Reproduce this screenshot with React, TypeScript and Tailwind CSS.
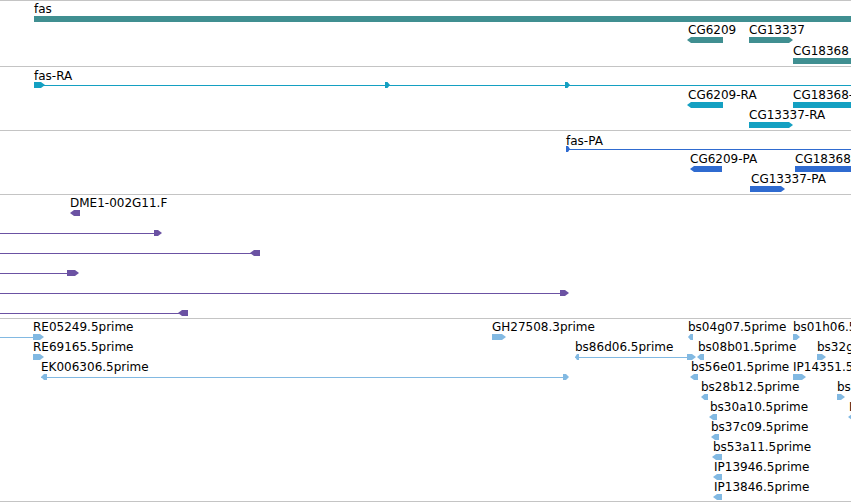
type Dir = 'l' | 'r' | 'n';
type Glyph = { x1: number; x2: number; y: number; h?: number; dir: Dir };
type Line = { x1: number; x2: number; y: number };
type Label = { text: string; x: number; y: number };

interface TrackData {
  top: number;
  height: number;
  color: string;
  lines: Line[];
  glyphs: Glyph[];
  labels: Label[];
  last?: boolean;
}

// polygon for a feature box, pointed at one end to show the strand
function points(g: Glyph) {
  const h = g.h ?? 6;
  const y1 = g.y;
  const y2 = g.y + h;
  const ym = g.y + h / 2;
  const t = Math.min(4, (g.x2 - g.x1) / 2);
  if (g.dir === 'r') return `${g.x1},${y1} ${g.x2 - t},${y1} ${g.x2},${ym} ${g.x2 - t},${y2} ${g.x1},${y2}`;
  if (g.dir === 'l') return `${g.x1},${ym} ${g.x1 + t},${y1} ${g.x2},${y1} ${g.x2},${y2} ${g.x1 + t},${y2}`;
  return `${g.x1},${y1} ${g.x2},${y1} ${g.x2},${y2} ${g.x1},${y2}`;
}

const tracks: TrackData[] = [
  {
    top: 0,
    height: 66,
    color: '#408f91',
    lines: [],
    glyphs: [
      { x1: 34, x2: 852, y: 16, dir: 'n' },
      { x1: 687, x2: 723, y: 37, dir: 'l' },
      { x1: 749, x2: 793, y: 37, dir: 'r' },
      { x1: 793, x2: 852, y: 58, dir: 'n' },
    ],
    labels: [
      { text: 'fas', x: 34, y: 4 },
      { text: 'CG6209', x: 688, y: 25 },
      { text: 'CG13337', x: 749, y: 25 },
      { text: 'CG18368', x: 793, y: 46 },
    ],
  },
  {
    top: 66,
    height: 64,
    color: '#14a0c2',
    lines: [{ x1: 34, x2: 852, y: 85 }],
    glyphs: [
      { x1: 34, x2: 45, y: 82, dir: 'r' },
      { x1: 385, x2: 390, y: 82, dir: 'r' },
      { x1: 565, x2: 570, y: 82, dir: 'r' },
      { x1: 687, x2: 723, y: 102, dir: 'l' },
      { x1: 793, x2: 852, y: 102, dir: 'n' },
      { x1: 749, x2: 793, y: 122, dir: 'r' },
    ],
    labels: [
      { text: 'fas-RA', x: 34, y: 71 },
      { text: 'CG6209-RA', x: 688, y: 90 },
      { text: 'CG18368-RA', x: 793, y: 90 },
      { text: 'CG13337-RA', x: 749, y: 110 },
    ],
  },
  {
    top: 130,
    height: 64,
    color: '#2f6bd0',
    lines: [{ x1: 566, x2: 852, y: 149 }],
    glyphs: [
      { x1: 566, x2: 570, y: 146, dir: 'r' },
      { x1: 690, x2: 722, y: 166, dir: 'l' },
      { x1: 795, x2: 852, y: 166, dir: 'n' },
      { x1: 750, x2: 785, y: 186, dir: 'r' },
    ],
    labels: [
      { text: 'fas-PA', x: 566, y: 136 },
      { text: 'CG6209-PA', x: 690, y: 154 },
      { text: 'CG18368-PA', x: 795, y: 154 },
      { text: 'CG13337-PA', x: 751, y: 174 },
    ],
  },
  {
    top: 194,
    height: 124,
    color: '#6b52a3',
    lines: [
      { x1: 0, x2: 156, y: 233 },
      { x1: 0, x2: 252, y: 253 },
      { x1: 0, x2: 69, y: 273 },
      { x1: 0, x2: 562, y: 293 },
      { x1: 0, x2: 180, y: 313 },
    ],
    glyphs: [
      { x1: 70, x2: 80, y: 210, dir: 'l' },
      { x1: 154, x2: 162, y: 230, dir: 'r' },
      { x1: 250, x2: 260, y: 250, dir: 'l' },
      { x1: 67, x2: 79, y: 270, dir: 'r' },
      { x1: 560, x2: 569, y: 290, dir: 'r' },
      { x1: 178, x2: 188, y: 310, dir: 'l' },
    ],
    labels: [{ text: 'DME1-002G11.F', x: 70, y: 198 }],
  },
  {
    top: 318,
    height: 184,
    color: '#82b9e2',
    last: true,
    lines: [
      { x1: 0, x2: 35, y: 337 },
      { x1: 41, x2: 568, y: 377 },
      { x1: 575, x2: 689, y: 357 },
    ],
    glyphs: [
      { x1: 33, x2: 44, y: 334, dir: 'r' },
      { x1: 33, x2: 44, y: 354, dir: 'r' },
      { x1: 41, x2: 47, y: 374, dir: 'l' },
      { x1: 563, x2: 569, y: 374, dir: 'r' },
      { x1: 492, x2: 506, y: 334, dir: 'r' },
      { x1: 575, x2: 579, y: 354, dir: 'l' },
      { x1: 687, x2: 696, y: 354, dir: 'r' },
      { x1: 688, x2: 693, y: 334, dir: 'l' },
      { x1: 793, x2: 800, y: 334, dir: 'r' },
      { x1: 697, x2: 704, y: 354, dir: 'l' },
      { x1: 817, x2: 826, y: 354, dir: 'r' },
      { x1: 690, x2: 698, y: 374, dir: 'l' },
      { x1: 793, x2: 806, y: 374, dir: 'r' },
      { x1: 701, x2: 708, y: 394, dir: 'l' },
      { x1: 837, x2: 845, y: 394, dir: 'r' },
      { x1: 709, x2: 717, y: 414, dir: 'l' },
      { x1: 848, x2: 856, y: 414, dir: 'l' },
      { x1: 711, x2: 719, y: 434, dir: 'l' },
      { x1: 712, x2: 722, y: 454, dir: 'l' },
      { x1: 713, x2: 722, y: 474, dir: 'l' },
      { x1: 713, x2: 722, y: 494, dir: 'l' },
    ],
    labels: [
      { text: 'RE05249.5prime', x: 33, y: 322 },
      { text: 'RE69165.5prime', x: 33, y: 342 },
      { text: 'EK006306.5prime', x: 41, y: 362 },
      { text: 'GH27508.3prime', x: 492, y: 322 },
      { text: 'bs86d06.5prime', x: 575, y: 342 },
      { text: 'bs04g07.5prime', x: 688, y: 322 },
      { text: 'bs01h06.5prime', x: 793, y: 322 },
      { text: 'bs08b01.5prime', x: 698, y: 342 },
      { text: 'bs32g08.5prime', x: 817, y: 342 },
      { text: 'bs56e01.5prime', x: 691, y: 362 },
      { text: 'IP14351.5prime', x: 793, y: 362 },
      { text: 'bs28b12.5prime', x: 701, y: 382 },
      { text: 'bs19f05.5prime', x: 837, y: 382 },
      { text: 'bs30a10.5prime', x: 710, y: 402 },
      { text: 'IP12203.5prime', x: 849, y: 402 },
      { text: 'bs37c09.5prime', x: 711, y: 422 },
      { text: 'bs53a11.5prime', x: 713, y: 442 },
      { text: 'IP13946.5prime', x: 714, y: 462 },
      { text: 'IP13846.5prime', x: 714, y: 482 },
    ],
  },
];

function Track({ t }: { t: TrackData }) {
  const origin = t.top + 1;
  return (
    <div
      className={`relative w-full border-t border-[#c4c4c4] ${t.last ? 'border-b' : ''}`}
      style={{ height: t.height }}
    >
      <svg className="absolute left-0 top-0" width={851} height={t.height} overflow="visible">
        <g transform={`translate(0 ${-origin})`} fill={t.color}>
          {t.lines.map((l, i) => (
            <rect key={`l${i}`} x={l.x1} y={l.y} width={l.x2 - l.x1} height={1} />
          ))}
          {t.glyphs.map((g, i) => (
            <polygon key={`g${i}`} points={points(g)} />
          ))}
        </g>
      </svg>
      {t.labels.map((lb) => (
        <span
          key={lb.text}
          className="absolute whitespace-nowrap text-[12px] leading-[14px] text-black"
          style={{ left: lb.x, top: Math.round(lb.y - 2.4 - origin) }}
        >
          {lb.text}
        </span>
      ))}
    </div>
  );
}

export default function App() {
  return (
    <div className="w-[851px] h-[502px] overflow-hidden bg-white font-['DejaVu_Sans',sans-serif]">
      {tracks.map((t) => (
        <Track key={t.top} t={t} />
      ))}
    </div>
  );
}
